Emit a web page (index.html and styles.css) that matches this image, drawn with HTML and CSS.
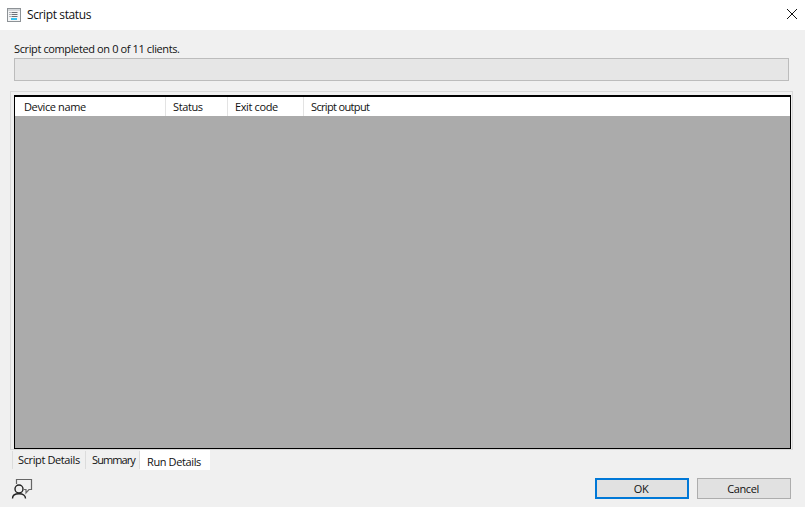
FILE: index.html
```html
<!DOCTYPE html>
<html lang="en">
<head>
<meta charset="utf-8">
<title>Script status</title>
<link rel="stylesheet" href="styles.css">
</head>
<body>
<div class="dialog">
  <header class="titlebar">
    <svg class="title-icon" width="16" height="16" viewBox="0 0 16 16">
      <rect x="1.5" y="1.5" width="13" height="13" fill="#f3f4f5" stroke="#8d9296"/>
      <rect x="2" y="2" width="12" height="2" fill="#d3d6d9"/>
      <path d="M3.5 5.5h1M5.5 5.5h6M3.5 7.5h1M5.5 7.5h6M3.5 9.5h1M5.5 9.5h6" stroke="#6a7078" stroke-width="1"/>
      <rect x="5" y="11" width="6" height="2" fill="#35c0ee"/>
    </svg>
    <span class="title-text">Script status</span>
    <svg class="close-icon" width="10" height="10" viewBox="0 0 10 10">
      <path d="M0 0L10 10M10 0L0 10" stroke="#111" stroke-width="1" fill="none"/>
    </svg>
  </header>
  <main class="content">
    <p class="status-text">Script completed on 0 of 11 clients.</p>
    <div class="progress"></div>
    <section class="tab-panel">
      <div class="grid">
        <div class="grid-header">
          <div class="col col-device">Device name</div>
          <div class="col col-status">Status</div>
          <div class="col col-exit">Exit code</div>
          <div class="col col-output">Script output</div>
        </div>
        <div class="grid-body"></div>
      </div>
    </section>
    <nav class="tabs">
      <div class="tab tab-first">Script Details</div>
      <div class="tab tab-second">Summary</div>
      <div class="tab tab-active">Run Details</div>
    </nav>
    <footer class="footer">
      <svg class="user-icon" width="22" height="22" viewBox="0 0 22 22">
        <path d="M5.5 7V2.5H20.5V12.5H18L15 16V12.5H13" fill="none" stroke="#666" stroke-width="1.2"/>
        <circle cx="8" cy="12" r="4" fill="#f0f0f0" stroke="#222" stroke-width="1.4"/>
        <path d="M1.5 21.5C1.5 18.5 4 16.8 8 16.8S14.5 18.5 14.5 21.5" fill="none" stroke="#222" stroke-width="1.4"/>
      </svg>
      <div class="buttons">
        <button class="btn btn-default" type="button">OK</button>
        <button class="btn" type="button">Cancel</button>
      </div>
    </footer>
  </main>
</div>
</body>
</html>
```
FILE: styles.css
```css
* { box-sizing: border-box; }
html, body { margin: 0; padding: 0; }
body {
  width: 805px;
  height: 507px;
  overflow: hidden;
  background: #f0f0f0;
  font-family: "Open Sans", Roboto, "Liberation Sans", sans-serif;
  font-size: 11px;
  letter-spacing: -0.38px;
  color: #111;
}
.dialog { display: flex; flex-direction: column; height: 507px; }
.titlebar {
  height: 30px;
  flex: none;
  background: #fff;
  display: flex;
  align-items: center;
  padding: 0 8px 0 6px;
}
.title-icon { flex: none; margin-top: -1px; }
.title-text { margin-left: 5px; font-size: 12px; margin-top: -1px; letter-spacing: -0.38px; }
.close-icon { margin-left: auto; margin-top: -2px; }
.content { flex: 1; display: flex; flex-direction: column; padding: 0 14px; }
.status-text { margin: 11px 0 0; height: 17px; line-height: 15px; }
.progress {
  height: 23px;
  width: 775px;
  background: #e6e6e6;
  border: 1px solid #bcbcbc;
}
.tab-panel {
  margin: 10px 0 0 -4px;
  width: 783px;
  height: 359px;
  border: 1px solid #d9d9d9;
  padding: 3px 1px 0 3px;
}
.grid {
  width: 777px;
  height: 354px;
  border: 1px solid #000;
  border-top-width: 2px;
  display: flex;
  flex-direction: column;
  background: #ababab;
}
.grid-header {
  height: 19px;
  background: #fff;
  display: flex;
  flex: none;
}
.col {
  border-right: 1px solid #e3e3e3;
  line-height: 20px;
  padding-left: 7px;
}
.col-device { width: 151px; padding-left: 9px; }
.col-status { width: 62px; }
.col-exit { width: 76px; }
.col-output { flex: 1; border-right: 0; letter-spacing: -0.65px; }
.grid-body { flex: 1; }
.tabs {
  display: flex;
  align-items: flex-start;
  height: 20px;
  margin-left: -2px;
}
.tab {
  height: 18px;
  line-height: 18px;
  margin-top: 1px;
  border-right: 1px solid #dcdcdc;
  white-space: nowrap;
}
.tab-first { border-left: 1px solid #dcdcdc; padding-left: 5px; width: 74px; }
.tab-second { width: 54px; padding-left: 6px; letter-spacing: -0.9px; }
.tab-active {
  background: #fff;
  height: 20px;
  line-height: 24px;
  margin-top: 0;
  width: 70px;
  padding-left: 7px;
  border-right: 0;
}
.footer {
  flex: 1;
  display: flex;
  align-items: flex-start;
  justify-content: space-between;
  padding-top: 7px;
  margin-left: -3px;
}
.buttons { display: flex; gap: 8px; margin-top: 1px; }
.btn {
  width: 94px;
  height: 21px;
  background: #e1e1e1;
  border: 1px solid #adadad;
  font: inherit;
  letter-spacing: inherit;
  color: #111;
  padding: 0 2px 0 0;
}
.btn-default { border: 2px solid #0078d7; }
```
